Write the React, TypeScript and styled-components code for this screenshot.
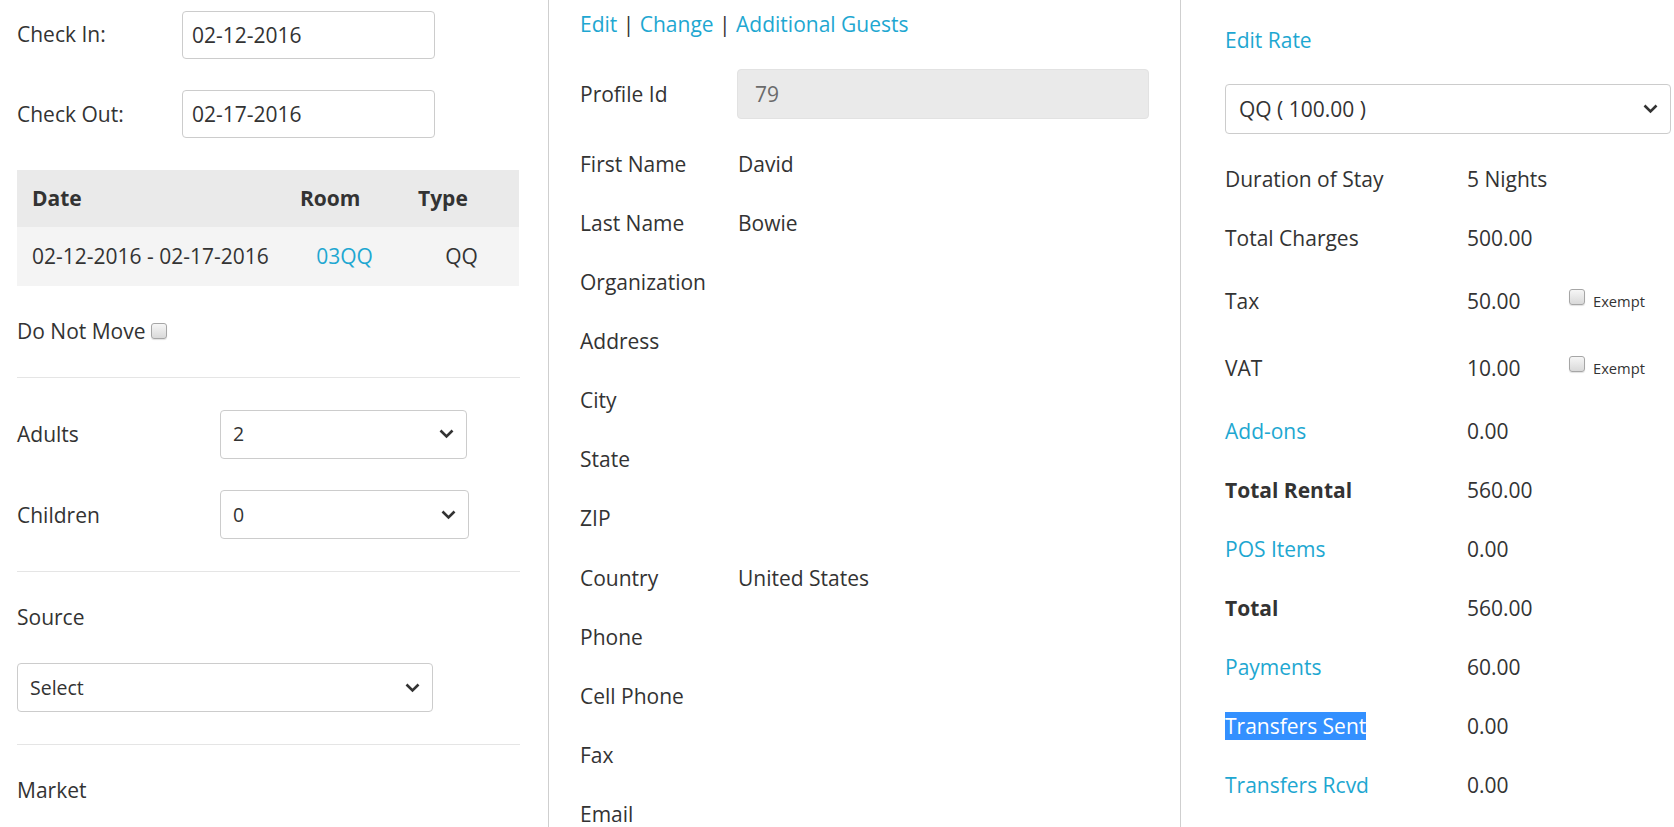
import React from 'react';
import styled, { createGlobalStyle } from 'styled-components';

const GlobalStyle = createGlobalStyle`
  html, body {
    margin: 0;
    padding: 0;
    background: #fff;
  }
  body {
    font-family: "Open Sans", "Liberation Sans", Arial, sans-serif;
    font-size: 21px;
    line-height: 28.6px;
    color: #333;
  }
  * {
    box-sizing: border-box;
  }
`;

const LINK = '#1ea7d1';

const Page = styled.div`
  display: flex;
  height: 827px;
  overflow: hidden;
`;

const LeftCol = styled.div`
  width: 548px;
  flex-shrink: 0;
  padding: 10.5px 29px 0 17px;
  display: flex;
  flex-direction: column;
  gap: 31.5px;
  & > * {
    flex-shrink: 0;
  }
`;

const MidCol = styled.div`
  width: 632px;
  flex-shrink: 0;
  border-left: 1px solid #cfcfcf;
  padding: 10px 31px 0 31px;
  display: flex;
  flex-direction: column;
  & > * {
    flex-shrink: 0;
  }
`;

const RightCol = styled.div`
  flex: 1;
  border-left: 1px solid #cfcfcf;
  padding: 25.7px 3px 0 44px;
  display: flex;
  flex-direction: column;
  & > * {
    flex-shrink: 0;
  }
`;

const FieldRow = styled.div`
  display: flex;
  align-items: center;
`;

const Label = styled.span<{ $width?: number; $bold?: boolean }>`
  flex-shrink: 0;
  width: ${(p) => (p.$width ? `${p.$width}px` : 'auto')};
  font-weight: ${(p) => (p.$bold ? 700 : 400)};
`;

const TextInput = styled.input<{ $width: number; $height: number; $pad: number; $readonly?: boolean }>`
  width: ${(p) => p.$width}px;
  height: ${(p) => p.$height}px;
  padding: 0 ${(p) => p.$pad}px;
  border: 1px solid ${(p) => (p.$readonly ? '#e2e2e2' : '#cccccc')};
  border-radius: 4px;
  background: ${(p) => (p.$readonly ? '#eaeaea' : '#fff')};
  color: ${(p) => (p.$readonly ? '#6b6b6b' : '#333')};
  font-family: inherit;
  font-size: 21px;
  outline: none;
`;

const SelectBox = styled.div<{ $width: number; $height: number }>`
  width: ${(p) => p.$width}px;
  height: ${(p) => p.$height}px;
  padding: 0 12px 0 12px;
  border: 1px solid #cccccc;
  border-radius: 4px;
  background: #fff;
  display: flex;
  align-items: center;
  justify-content: space-between;
  font-size: ${(p) => (p.$height > 49 ? 21 : 19.5)}px;
`;

const Table = styled.table`
  width: 502px;
  border-collapse: collapse;
`;

const HeadCell = styled.th<{ $width: number }>`
  width: ${(p) => p.$width}px;
  height: 57.6px;
  padding: 0 14px 0 15px;
  background: #eaeaea;
  text-align: left;
  font-weight: 700;
`;

const Cell = styled.td<{ $center?: boolean }>`
  height: 58.7px;
  padding: 0 14px 0 15px;
  background: #f4f4f4;
  text-align: ${(p) => (p.$center ? 'center' : 'left')};
`;

const Link = styled.a`
  color: ${LINK};
  text-decoration: none;
  cursor: pointer;
`;

const Line = styled.div`
  height: 28.6px;
  white-space: nowrap;
`;

const CheckBox = styled.input.attrs({ type: 'checkbox' })<{ $lift?: number }>`
  appearance: none;
  -webkit-appearance: none;
  width: 16px;
  height: 16px;
  margin: 0;
  border: 1px solid #a6a6a6;
  border-radius: 3px;
  background: linear-gradient(#f6f6f6, #d9d9d9);
  box-shadow: 0 1px 1px rgba(0, 0, 0, 0.12);
  vertical-align: ${(p) => p.$lift ?? 0}px;
`;

const Divider = styled.hr`
  margin: 0;
  border: none;
  border-top: 1px solid #e5e5e5;
  width: 503px;
`;

const LinkBar = styled(Line)`
  margin-bottom: 26px;
`;

const ProfileRow = styled(FieldRow)`
  height: 59px;
  margin-bottom: 11px;
`;

const InfoRow = styled(FieldRow)`
  height: 59.1px;
`;

const EditRate = styled(Line)`
  margin-bottom: 30px;
`;

const RateSelect = styled(SelectBox)`
  margin-bottom: 15.7px;
  padding-left: 13px;
`;

const SumRow = styled.div<{ $tall?: boolean }>`
  display: flex;
  align-items: center;
  height: ${(p) => (p.$tall ? 67 : 59)}px;
`;

const Value = styled.span`
  width: 102px;
  flex-shrink: 0;
`;

const Exempt = styled.span`
  font-size: 14.7px;
  line-height: 28.6px;
  white-space: nowrap;
  & > input {
    margin-right: 8px;
  }
`;

const Selected = styled.span`
  background: #3390ff;
  color: #fff;
`;

const Chevron = () => (
  <svg width="15" height="10" viewBox="0 0 15 10">
    <polyline points="1.5,1.5 7.5,7.5 13.5,1.5" fill="none" stroke="#333" strokeWidth="2.6" />
  </svg>
);

interface ISummary {
  label: string;
  value: string;
  link?: boolean;
  bold?: boolean;
  exempt?: boolean;
  selected?: boolean;
}

const guestInfo: [string, string][] = [
  ['First Name', 'David'],
  ['Last Name', 'Bowie'],
  ['Organization', ''],
  ['Address', ''],
  ['City', ''],
  ['State', ''],
  ['ZIP', ''],
  ['Country', 'United States'],
  ['Phone', ''],
  ['Cell Phone', ''],
  ['Fax', ''],
  ['Email', ''],
];

const summary: ISummary[] = [
  { label: 'Duration of Stay', value: '5 Nights' },
  { label: 'Total Charges', value: '500.00' },
  { label: 'Tax', value: '50.00', exempt: true },
  { label: 'VAT', value: '10.00', exempt: true },
  { label: 'Add-ons', value: '0.00', link: true },
  { label: 'Total Rental', value: '560.00', bold: true },
  { label: 'POS Items', value: '0.00', link: true },
  { label: 'Total', value: '560.00', bold: true },
  { label: 'Payments', value: '60.00', link: true },
  { label: 'Transfers Sent', value: '0.00', link: true, selected: true },
  { label: 'Transfers Rcvd', value: '0.00', link: true },
];

export default function App() {
  return (
    <Page>
      <GlobalStyle />
      <LeftCol>
        <FieldRow>
          <Label $width={165}>Check In:</Label>
          <TextInput $width={253} $height={48} $pad={9} defaultValue="02-12-2016" />
        </FieldRow>
        <FieldRow>
          <Label $width={165}>Check Out:</Label>
          <TextInput $width={253} $height={48} $pad={9} defaultValue="02-17-2016" />
        </FieldRow>
        <Table>
          <thead>
            <tr>
              <HeadCell $width={268}>Date</HeadCell>
              <HeadCell $width={118}>Room</HeadCell>
              <HeadCell $width={116}>Type</HeadCell>
            </tr>
          </thead>
          <tbody>
            <tr>
              <Cell>02-12-2016 - 02-17-2016</Cell>
              <Cell $center>
                <Link>03QQ</Link>
              </Cell>
              <Cell $center>QQ</Cell>
            </tr>
          </tbody>
        </Table>
        <Line>
          Do Not Move <CheckBox />
        </Line>
        <Divider />
        <FieldRow>
          <Label $width={203}>Adults</Label>
          <SelectBox $width={247} $height={49}>
            <span>2</span>
            <Chevron />
          </SelectBox>
        </FieldRow>
        <FieldRow>
          <Label $width={203}>Children</Label>
          <SelectBox $width={249} $height={49}>
            <span>0</span>
            <Chevron />
          </SelectBox>
        </FieldRow>
        <Divider />
        <Line>Source</Line>
        <SelectBox $width={416} $height={49}>
          <span>Select</span>
          <Chevron />
        </SelectBox>
        <Divider />
        <Line>Market</Line>
      </LeftCol>

      <MidCol>
        <LinkBar>
          <Link>Edit</Link> | <Link>Change</Link> | <Link>Additional Guests</Link>
        </LinkBar>
        <ProfileRow>
          <Label $width={157}>Profile Id</Label>
          <TextInput $width={412} $height={50} $pad={17} $readonly readOnly value="79" />
        </ProfileRow>
        {guestInfo.map(([label, value]) => (
          <InfoRow key={label}>
            <Label $width={158}>{label}</Label>
            <span>{value}</span>
          </InfoRow>
        ))}
      </MidCol>

      <RightCol>
        <EditRate>
          <Link>Edit Rate</Link>
        </EditRate>
        <RateSelect $width={446} $height={50}>
          <span>QQ ( 100.00 )</span>
          <Chevron />
        </RateSelect>
        {summary.map((item) => (
          <SumRow key={item.label} $tall={item.exempt}>
            <Label $width={242} $bold={item.bold}>
              {item.link ? (
                <Link>{item.selected ? <Selected>{item.label}</Selected> : item.label}</Link>
              ) : (
                item.label
              )}
            </Label>
            <Value>{item.value}</Value>
            {item.exempt && (
              <Exempt>
                <CheckBox $lift={2} />
                Exempt
              </Exempt>
            )}
          </SumRow>
        ))}
      </RightCol>
    </Page>
  );
}
